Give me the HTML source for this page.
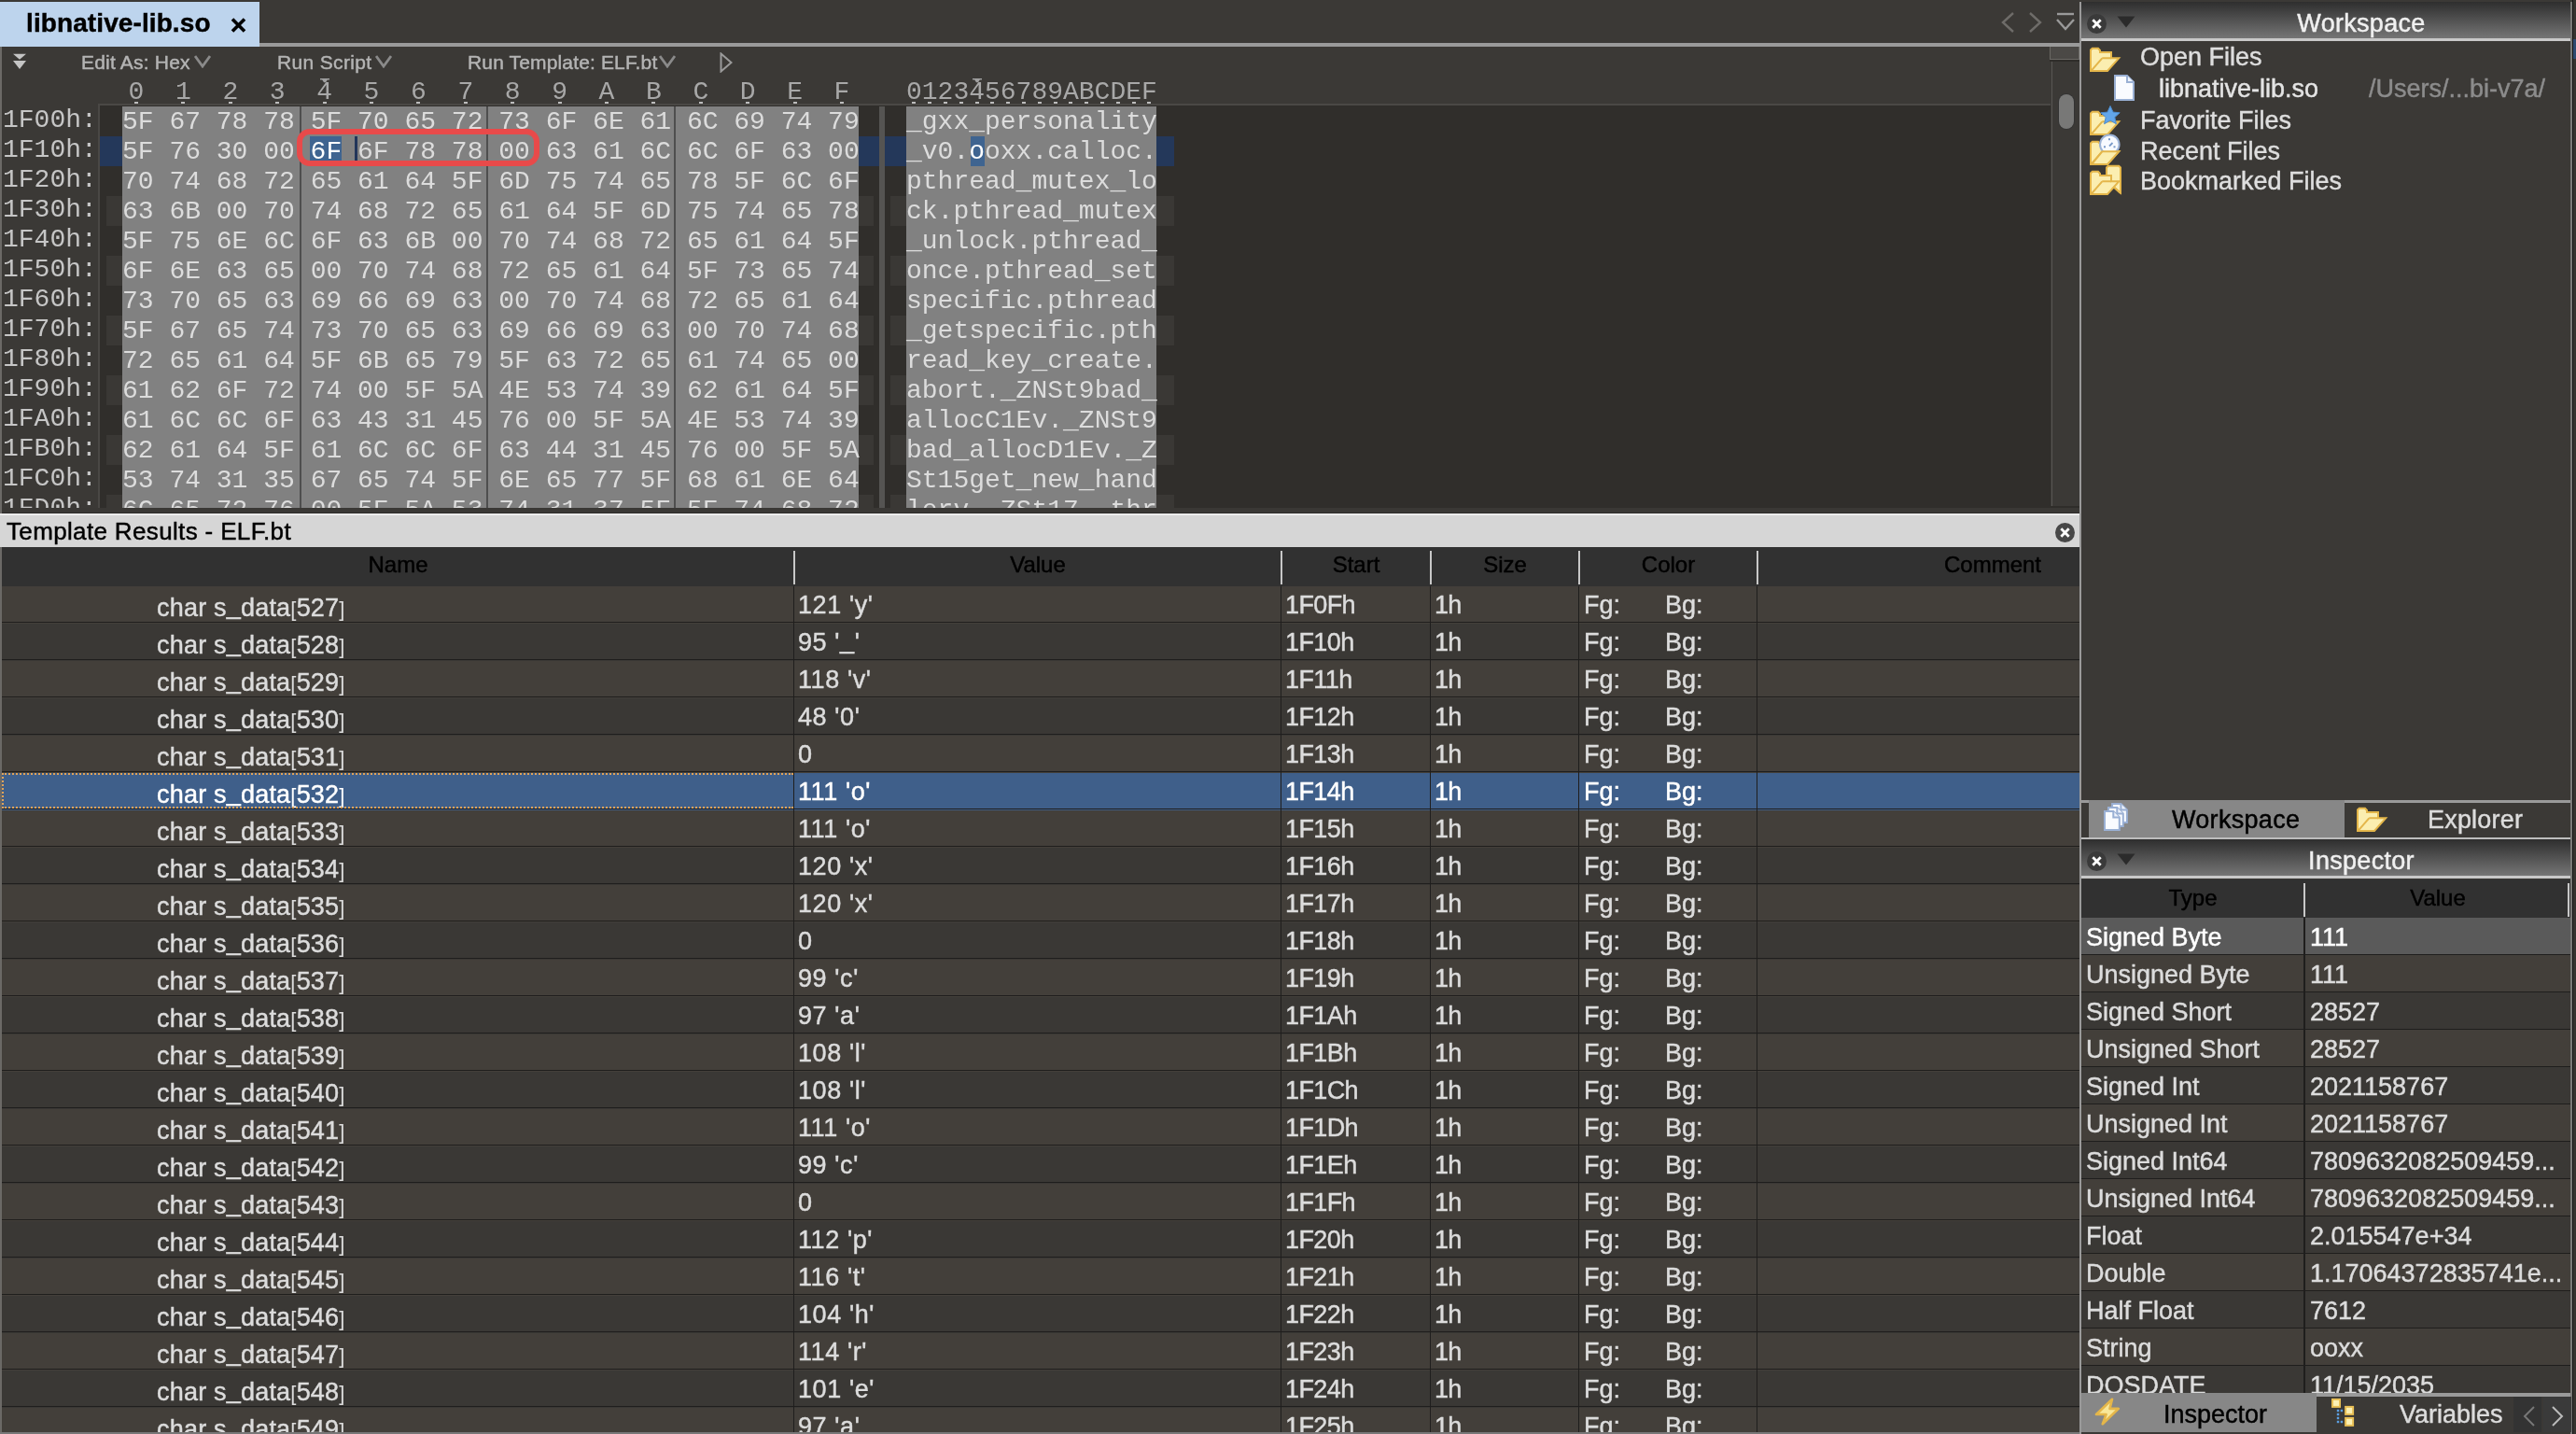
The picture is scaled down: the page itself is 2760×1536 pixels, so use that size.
<!DOCTYPE html><html><head><meta charset="utf-8"><style>
*{margin:0;padding:0;box-sizing:border-box}
html,body{width:2760px;height:1536px;overflow:hidden;background:#3b3936;font-family:"Liberation Sans",sans-serif}
.a{position:absolute}
.t{position:absolute;white-space:pre;line-height:1;-webkit-text-stroke-width:0.45px}
.m{font-family:"Liberation Mono",monospace;font-size:28px;-webkit-text-stroke-width:0}
#w{position:absolute;left:0;top:0;width:2760px;height:1536px;overflow:hidden;will-change:transform;background:#3b3936}
</style></head><body><div id="w">
<div class="a" style="left:0px;top:2px;width:278px;height:48px;background:#bdd4ed;"></div>
<div class="t" style="left:28px;top:11px;font-size:28px;color:#000;font-weight:bold;letter-spacing:0.1px">libnative-lib.so</div>
<svg class="a" style="left:245px;top:18px" width="21" height="18" viewBox="0 0 21 18"><path d="M4 2.5L17 15.5M17 2.5L4 15.5" stroke="#000" stroke-width="3.6"/></svg>
<div class="a" style="left:278px;top:46px;width:1950px;height:4px;background:#9a9a9a;"></div>
<div class="a" style="left:0px;top:50px;width:2px;height:1486px;background:#6b6966;"></div>
<svg class="a" style="left:2142px;top:12px" width="18" height="24" viewBox="0 0 18 24"><path d="M15 2L4 12l11 10" fill="none" stroke="#6e6c69" stroke-width="2.4"/></svg>
<svg class="a" style="left:2172px;top:12px" width="18" height="24" viewBox="0 0 18 24"><path d="M3 2l11 10L3 22" fill="none" stroke="#6e6c69" stroke-width="2.4"/></svg>
<svg class="a" style="left:2202px;top:12px" width="22" height="24" viewBox="0 0 22 24"><path d="M2 3h18" stroke="#9a9a9a" stroke-width="2.4"/><path d="M2 9l9 10 9-10" fill="none" stroke="#9a9a9a" stroke-width="2.4"/></svg>
<svg class="a" style="left:13px;top:57px" width="16" height="18" viewBox="0 0 16 18"><path d="M1 0.7h14l-7 6z M1 8h14l-7 9z" fill="#c4c4c4"/></svg>
<div class="t" style="left:87px;top:55.5px;font-size:21px;color:#b4b4b4;letter-spacing:0.2px">Edit As: Hex</div>
<svg class="a" style="left:208px;top:59px" width="18" height="14" viewBox="0 0 18 14"><path d="M1 1L9.0 12L17 1" fill="none" stroke="#8a8a8a" stroke-width="2.8"/></svg>
<div class="t" style="left:297px;top:55.5px;font-size:21px;color:#b4b4b4;letter-spacing:0.35px">Run Script</div>
<svg class="a" style="left:402px;top:59px" width="18" height="14" viewBox="0 0 18 14"><path d="M1 1L9.0 12L17 1" fill="none" stroke="#8a8a8a" stroke-width="2.8"/></svg>
<div class="t" style="left:501px;top:55.5px;font-size:21px;color:#b4b4b4;letter-spacing:0.15px">Run Template: ELF.bt</div>
<svg class="a" style="left:706px;top:59px" width="18" height="14" viewBox="0 0 18 14"><path d="M1 1L9.0 12L17 1" fill="none" stroke="#8a8a8a" stroke-width="2.8"/></svg>
<svg class="a" style="left:771px;top:56px" width="14" height="22" viewBox="0 0 14 22"><path d="M1.5 1.5L12.5 11L1.5 20.5z" fill="none" stroke="#9a9a9a" stroke-width="2"/></svg>
<div class="a" style="left:105px;top:111px;width:2092px;height:433px;background:#302e2b;border-top:2px solid #4a4845;border-left:2px solid #4a4845"></div>
<div class="a" style="left:2198px;top:64px;width:30px;height:478px;background:#3b3936;border-left:1.3px solid #585653"></div>
<div class="a" style="left:2196px;top:64px;width:32px;height:2px;background:#2f2d2a;"></div>
<div class="a" style="left:2197px;top:542px;width:31px;height:2px;background:#2f2d2a;"></div>
<div class="a" style="left:2196px;top:50px;width:32px;height:14px;background:#4b4946;border:1.5px solid #6a6864;border-top:none"></div>
<div class="a" style="left:2206px;top:101px;width:16px;height:37px;border-radius:8px;background:#787877;box-shadow:0 0 0 1px #333"></div>
<div class="t m" style="left:137.6px;top:84px;font-size:28px;color:#aaa;"></div>
<div class="t m" style="left:137.6px;top:85px;font-size:28px;color:#a8a8a8;">0</div>
<div class="a" style="left:144.0px;top:108.5px;width:4px;height:2px;background:#bdbdbd;"></div>
<div class="t m" style="left:188.0px;top:85px;font-size:28px;color:#a8a8a8;">1</div>
<div class="a" style="left:194.4px;top:108.5px;width:4px;height:2px;background:#bdbdbd;"></div>
<div class="t m" style="left:238.4px;top:85px;font-size:28px;color:#a8a8a8;">2</div>
<div class="a" style="left:244.8px;top:108.5px;width:4px;height:2px;background:#bdbdbd;"></div>
<div class="t m" style="left:288.8px;top:85px;font-size:28px;color:#a8a8a8;">3</div>
<div class="a" style="left:295.2px;top:108.5px;width:4px;height:2px;background:#bdbdbd;"></div>
<div class="t m" style="left:339.2px;top:85px;font-size:28px;color:#a8a8a8;">4</div>
<div class="a" style="left:345.6px;top:108.5px;width:4px;height:2px;background:#bdbdbd;"></div>
<div class="t m" style="left:389.6px;top:85px;font-size:28px;color:#a8a8a8;">5</div>
<div class="a" style="left:396.0px;top:108.5px;width:4px;height:2px;background:#bdbdbd;"></div>
<div class="t m" style="left:440.0px;top:85px;font-size:28px;color:#a8a8a8;">6</div>
<div class="a" style="left:446.4px;top:108.5px;width:4px;height:2px;background:#bdbdbd;"></div>
<div class="t m" style="left:490.4px;top:85px;font-size:28px;color:#a8a8a8;">7</div>
<div class="a" style="left:496.8px;top:108.5px;width:4px;height:2px;background:#bdbdbd;"></div>
<div class="t m" style="left:540.8px;top:85px;font-size:28px;color:#a8a8a8;">8</div>
<div class="a" style="left:547.2px;top:108.5px;width:4px;height:2px;background:#bdbdbd;"></div>
<div class="t m" style="left:591.2px;top:85px;font-size:28px;color:#a8a8a8;">9</div>
<div class="a" style="left:597.6px;top:108.5px;width:4px;height:2px;background:#bdbdbd;"></div>
<div class="t m" style="left:641.6px;top:85px;font-size:28px;color:#a8a8a8;">A</div>
<div class="a" style="left:648.0px;top:108.5px;width:4px;height:2px;background:#bdbdbd;"></div>
<div class="t m" style="left:692.0px;top:85px;font-size:28px;color:#a8a8a8;">B</div>
<div class="a" style="left:698.4px;top:108.5px;width:4px;height:2px;background:#bdbdbd;"></div>
<div class="t m" style="left:742.4px;top:85px;font-size:28px;color:#a8a8a8;">C</div>
<div class="a" style="left:748.8px;top:108.5px;width:4px;height:2px;background:#bdbdbd;"></div>
<div class="t m" style="left:792.8px;top:85px;font-size:28px;color:#a8a8a8;">D</div>
<div class="a" style="left:799.2px;top:108.5px;width:4px;height:2px;background:#bdbdbd;"></div>
<div class="t m" style="left:843.2px;top:85px;font-size:28px;color:#a8a8a8;">E</div>
<div class="a" style="left:849.6px;top:108.5px;width:4px;height:2px;background:#bdbdbd;"></div>
<div class="t m" style="left:893.6px;top:85px;font-size:28px;color:#a8a8a8;">F</div>
<div class="a" style="left:900.0px;top:108.5px;width:4px;height:2px;background:#bdbdbd;"></div>
<div class="t m" style="left:971.0px;top:85px;font-size:28px;color:#a8a8a8;">0</div>
<div class="a" style="left:977.4px;top:108.5px;width:4px;height:2px;background:#bdbdbd;"></div>
<div class="t m" style="left:987.8px;top:85px;font-size:28px;color:#a8a8a8;">1</div>
<div class="a" style="left:994.2px;top:108.5px;width:4px;height:2px;background:#bdbdbd;"></div>
<div class="t m" style="left:1004.6px;top:85px;font-size:28px;color:#a8a8a8;">2</div>
<div class="a" style="left:1011.0px;top:108.5px;width:4px;height:2px;background:#bdbdbd;"></div>
<div class="t m" style="left:1021.4px;top:85px;font-size:28px;color:#a8a8a8;">3</div>
<div class="a" style="left:1027.8px;top:108.5px;width:4px;height:2px;background:#bdbdbd;"></div>
<div class="t m" style="left:1038.2px;top:85px;font-size:28px;color:#a8a8a8;">4</div>
<div class="a" style="left:1044.6px;top:108.5px;width:4px;height:2px;background:#bdbdbd;"></div>
<div class="t m" style="left:1055.0px;top:85px;font-size:28px;color:#a8a8a8;">5</div>
<div class="a" style="left:1061.4px;top:108.5px;width:4px;height:2px;background:#bdbdbd;"></div>
<div class="t m" style="left:1071.8px;top:85px;font-size:28px;color:#a8a8a8;">6</div>
<div class="a" style="left:1078.2px;top:108.5px;width:4px;height:2px;background:#bdbdbd;"></div>
<div class="t m" style="left:1088.6px;top:85px;font-size:28px;color:#a8a8a8;">7</div>
<div class="a" style="left:1095.0px;top:108.5px;width:4px;height:2px;background:#bdbdbd;"></div>
<div class="t m" style="left:1105.4px;top:85px;font-size:28px;color:#a8a8a8;">8</div>
<div class="a" style="left:1111.8px;top:108.5px;width:4px;height:2px;background:#bdbdbd;"></div>
<div class="t m" style="left:1122.2px;top:85px;font-size:28px;color:#a8a8a8;">9</div>
<div class="a" style="left:1128.6px;top:108.5px;width:4px;height:2px;background:#bdbdbd;"></div>
<div class="t m" style="left:1139.0px;top:85px;font-size:28px;color:#a8a8a8;">A</div>
<div class="a" style="left:1145.4px;top:108.5px;width:4px;height:2px;background:#bdbdbd;"></div>
<div class="t m" style="left:1155.8px;top:85px;font-size:28px;color:#a8a8a8;">B</div>
<div class="a" style="left:1162.2px;top:108.5px;width:4px;height:2px;background:#bdbdbd;"></div>
<div class="t m" style="left:1172.6px;top:85px;font-size:28px;color:#a8a8a8;">C</div>
<div class="a" style="left:1179.0px;top:108.5px;width:4px;height:2px;background:#bdbdbd;"></div>
<div class="t m" style="left:1189.4px;top:85px;font-size:28px;color:#a8a8a8;">D</div>
<div class="a" style="left:1195.8px;top:108.5px;width:4px;height:2px;background:#bdbdbd;"></div>
<div class="t m" style="left:1206.2px;top:85px;font-size:28px;color:#a8a8a8;">E</div>
<div class="a" style="left:1212.6px;top:108.5px;width:4px;height:2px;background:#bdbdbd;"></div>
<div class="t m" style="left:1223.0px;top:85px;font-size:28px;color:#a8a8a8;">F</div>
<div class="a" style="left:1229.4px;top:108.5px;width:4px;height:2px;background:#bdbdbd;"></div>
<svg class="a" style="left:342px;top:83px" width="12" height="8" viewBox="0 0 12 8"><path d="M1 1h10v1.6h-2.2l-1.8 2.6h-2l-1.8-2.6H1z" fill="#a0a0a0"/></svg>
<svg class="a" style="left:1040.6px;top:83px" width="12" height="8" viewBox="0 0 12 8"><path d="M1 1h10v1.6h-2.2l-1.8 2.6h-2l-1.8-2.6H1z" fill="#a0a0a0"/></svg>
<div class="a" style="left:0;top:114px;width:2197px;height:430px;overflow:hidden">
<div class="a" style="left:131px;top:0px;width:789px;height:32px;background:#818181;"></div>
<div class="a" style="left:971px;top:0px;width:268px;height:32px;background:#818181;"></div>
<div class="t m" style="left:3px;top:1px;font-size:28px;color:#c6c6c6;">1F00h:</div>
<div class="t m" style="left:131px;top:3px;font-size:28px;color:#dcdcdc;">5F 67 78 78 5F 70 65 72 73 6F 6E 61 6C 69 74 79</div>
<div class="t m" style="left:971px;top:3px;font-size:28px;color:#dcdcdc;">_gxx_personality</div>
<div class="a" style="left:107px;top:32px;width:1151px;height:32px;background:#24385a;"></div>
<div class="a" style="left:131px;top:32px;width:789px;height:32px;background:#818181;"></div>
<div class="a" style="left:971px;top:32px;width:268px;height:32px;background:#818181;"></div>
<div class="t m" style="left:3px;top:33px;font-size:28px;color:#c6c6c6;">1F10h:</div>
<div class="t m" style="left:131px;top:35px;font-size:28px;color:#dcdcdc;">5F 76 30 00 6F 6F 78 78 00 63 61 6C 6C 6F 63 00</div>
<div class="t m" style="left:971px;top:35px;font-size:28px;color:#dcdcdc;">_v0.ooxx.calloc.</div>
<div class="a" style="left:131px;top:64px;width:789px;height:32px;background:#818181;"></div>
<div class="a" style="left:971px;top:64px;width:268px;height:32px;background:#818181;"></div>
<div class="t m" style="left:3px;top:65px;font-size:28px;color:#c6c6c6;">1F20h:</div>
<div class="t m" style="left:131px;top:67px;font-size:28px;color:#dcdcdc;">70 74 68 72 65 61 64 5F 6D 75 74 65 78 5F 6C 6F</div>
<div class="t m" style="left:971px;top:67px;font-size:28px;color:#dcdcdc;">pthread_mutex_lo</div>
<div class="a" style="left:114px;top:96px;width:17px;height:32px;background:#3a3835;"></div>
<div class="a" style="left:920px;top:96px;width:16px;height:32px;background:#3a3835;"></div>
<div class="a" style="left:954px;top:96px;width:17px;height:32px;background:#3a3835;"></div>
<div class="a" style="left:1239px;top:96px;width:19px;height:32px;background:#3a3835;"></div>
<div class="a" style="left:131px;top:96px;width:789px;height:32px;background:#818181;"></div>
<div class="a" style="left:971px;top:96px;width:268px;height:32px;background:#818181;"></div>
<div class="t m" style="left:3px;top:97px;font-size:28px;color:#c6c6c6;">1F30h:</div>
<div class="t m" style="left:131px;top:99px;font-size:28px;color:#dcdcdc;">63 6B 00 70 74 68 72 65 61 64 5F 6D 75 74 65 78</div>
<div class="t m" style="left:971px;top:99px;font-size:28px;color:#dcdcdc;">ck.pthread_mutex</div>
<div class="a" style="left:131px;top:128px;width:789px;height:32px;background:#818181;"></div>
<div class="a" style="left:971px;top:128px;width:268px;height:32px;background:#818181;"></div>
<div class="t m" style="left:3px;top:129px;font-size:28px;color:#c6c6c6;">1F40h:</div>
<div class="t m" style="left:131px;top:131px;font-size:28px;color:#dcdcdc;">5F 75 6E 6C 6F 63 6B 00 70 74 68 72 65 61 64 5F</div>
<div class="t m" style="left:971px;top:131px;font-size:28px;color:#dcdcdc;">_unlock.pthread_</div>
<div class="a" style="left:114px;top:160px;width:17px;height:32px;background:#3a3835;"></div>
<div class="a" style="left:920px;top:160px;width:16px;height:32px;background:#3a3835;"></div>
<div class="a" style="left:954px;top:160px;width:17px;height:32px;background:#3a3835;"></div>
<div class="a" style="left:1239px;top:160px;width:19px;height:32px;background:#3a3835;"></div>
<div class="a" style="left:131px;top:160px;width:789px;height:32px;background:#818181;"></div>
<div class="a" style="left:971px;top:160px;width:268px;height:32px;background:#818181;"></div>
<div class="t m" style="left:3px;top:161px;font-size:28px;color:#c6c6c6;">1F50h:</div>
<div class="t m" style="left:131px;top:163px;font-size:28px;color:#dcdcdc;">6F 6E 63 65 00 70 74 68 72 65 61 64 5F 73 65 74</div>
<div class="t m" style="left:971px;top:163px;font-size:28px;color:#dcdcdc;">once.pthread_set</div>
<div class="a" style="left:131px;top:192px;width:789px;height:32px;background:#818181;"></div>
<div class="a" style="left:971px;top:192px;width:268px;height:32px;background:#818181;"></div>
<div class="t m" style="left:3px;top:193px;font-size:28px;color:#c6c6c6;">1F60h:</div>
<div class="t m" style="left:131px;top:195px;font-size:28px;color:#dcdcdc;">73 70 65 63 69 66 69 63 00 70 74 68 72 65 61 64</div>
<div class="t m" style="left:971px;top:195px;font-size:28px;color:#dcdcdc;">specific.pthread</div>
<div class="a" style="left:114px;top:224px;width:17px;height:32px;background:#3a3835;"></div>
<div class="a" style="left:920px;top:224px;width:16px;height:32px;background:#3a3835;"></div>
<div class="a" style="left:954px;top:224px;width:17px;height:32px;background:#3a3835;"></div>
<div class="a" style="left:1239px;top:224px;width:19px;height:32px;background:#3a3835;"></div>
<div class="a" style="left:131px;top:224px;width:789px;height:32px;background:#818181;"></div>
<div class="a" style="left:971px;top:224px;width:268px;height:32px;background:#818181;"></div>
<div class="t m" style="left:3px;top:225px;font-size:28px;color:#c6c6c6;">1F70h:</div>
<div class="t m" style="left:131px;top:227px;font-size:28px;color:#dcdcdc;">5F 67 65 74 73 70 65 63 69 66 69 63 00 70 74 68</div>
<div class="t m" style="left:971px;top:227px;font-size:28px;color:#dcdcdc;">_getspecific.pth</div>
<div class="a" style="left:131px;top:256px;width:789px;height:32px;background:#818181;"></div>
<div class="a" style="left:971px;top:256px;width:268px;height:32px;background:#818181;"></div>
<div class="t m" style="left:3px;top:257px;font-size:28px;color:#c6c6c6;">1F80h:</div>
<div class="t m" style="left:131px;top:259px;font-size:28px;color:#dcdcdc;">72 65 61 64 5F 6B 65 79 5F 63 72 65 61 74 65 00</div>
<div class="t m" style="left:971px;top:259px;font-size:28px;color:#dcdcdc;">read_key_create.</div>
<div class="a" style="left:114px;top:288px;width:17px;height:32px;background:#3a3835;"></div>
<div class="a" style="left:920px;top:288px;width:16px;height:32px;background:#3a3835;"></div>
<div class="a" style="left:954px;top:288px;width:17px;height:32px;background:#3a3835;"></div>
<div class="a" style="left:1239px;top:288px;width:19px;height:32px;background:#3a3835;"></div>
<div class="a" style="left:131px;top:288px;width:789px;height:32px;background:#818181;"></div>
<div class="a" style="left:971px;top:288px;width:268px;height:32px;background:#818181;"></div>
<div class="t m" style="left:3px;top:289px;font-size:28px;color:#c6c6c6;">1F90h:</div>
<div class="t m" style="left:131px;top:291px;font-size:28px;color:#dcdcdc;">61 62 6F 72 74 00 5F 5A 4E 53 74 39 62 61 64 5F</div>
<div class="t m" style="left:971px;top:291px;font-size:28px;color:#dcdcdc;">abort._ZNSt9bad_</div>
<div class="a" style="left:131px;top:320px;width:789px;height:32px;background:#818181;"></div>
<div class="a" style="left:971px;top:320px;width:268px;height:32px;background:#818181;"></div>
<div class="t m" style="left:3px;top:321px;font-size:28px;color:#c6c6c6;">1FA0h:</div>
<div class="t m" style="left:131px;top:323px;font-size:28px;color:#dcdcdc;">61 6C 6C 6F 63 43 31 45 76 00 5F 5A 4E 53 74 39</div>
<div class="t m" style="left:971px;top:323px;font-size:28px;color:#dcdcdc;">allocC1Ev._ZNSt9</div>
<div class="a" style="left:114px;top:352px;width:17px;height:32px;background:#3a3835;"></div>
<div class="a" style="left:920px;top:352px;width:16px;height:32px;background:#3a3835;"></div>
<div class="a" style="left:954px;top:352px;width:17px;height:32px;background:#3a3835;"></div>
<div class="a" style="left:1239px;top:352px;width:19px;height:32px;background:#3a3835;"></div>
<div class="a" style="left:131px;top:352px;width:789px;height:32px;background:#818181;"></div>
<div class="a" style="left:971px;top:352px;width:268px;height:32px;background:#818181;"></div>
<div class="t m" style="left:3px;top:353px;font-size:28px;color:#c6c6c6;">1FB0h:</div>
<div class="t m" style="left:131px;top:355px;font-size:28px;color:#dcdcdc;">62 61 64 5F 61 6C 6C 6F 63 44 31 45 76 00 5F 5A</div>
<div class="t m" style="left:971px;top:355px;font-size:28px;color:#dcdcdc;">bad_allocD1Ev._Z</div>
<div class="a" style="left:131px;top:384px;width:789px;height:32px;background:#818181;"></div>
<div class="a" style="left:971px;top:384px;width:268px;height:32px;background:#818181;"></div>
<div class="t m" style="left:3px;top:385px;font-size:28px;color:#c6c6c6;">1FC0h:</div>
<div class="t m" style="left:131px;top:387px;font-size:28px;color:#dcdcdc;">53 74 31 35 67 65 74 5F 6E 65 77 5F 68 61 6E 64</div>
<div class="t m" style="left:971px;top:387px;font-size:28px;color:#dcdcdc;">St15get_new_hand</div>
<div class="a" style="left:114px;top:416px;width:17px;height:32px;background:#3a3835;"></div>
<div class="a" style="left:920px;top:416px;width:16px;height:32px;background:#3a3835;"></div>
<div class="a" style="left:954px;top:416px;width:17px;height:32px;background:#3a3835;"></div>
<div class="a" style="left:1239px;top:416px;width:19px;height:32px;background:#3a3835;"></div>
<div class="a" style="left:131px;top:416px;width:789px;height:32px;background:#818181;"></div>
<div class="a" style="left:971px;top:416px;width:268px;height:32px;background:#818181;"></div>
<div class="t m" style="left:3px;top:417px;font-size:28px;color:#c6c6c6;">1FD0h:</div>
<div class="t m" style="left:131px;top:419px;font-size:28px;color:#dcdcdc;">6C 65 72 76 00 5F 5A 53 74 31 37 5F 5F 74 68 72</div>
<div class="t m" style="left:971px;top:419px;font-size:28px;color:#dcdcdc;">lerv._ZSt17__thr</div>
</div>
<div class="a" style="left:321px;top:114px;width:2px;height:430px;background:#4e4e4e;"></div>
<div class="a" style="left:521px;top:114px;width:2px;height:430px;background:#4e4e4e;"></div>
<div class="a" style="left:722px;top:114px;width:2px;height:430px;background:#4e4e4e;"></div>
<div class="a" style="left:942px;top:114px;width:6px;height:430px;background:#555452;"></div>
<div class="a" style="left:332px;top:146px;width:34px;height:26px;background:#3f6490;"></div>
<div class="t m" style="left:332.6px;top:149px;font-size:28px;color:#ffffff;">6F</div>
<div class="a" style="left:380px;top:146px;width:3px;height:26px;background:#22355a;"></div>
<div class="a" style="left:1040px;top:146px;width:15px;height:32px;background:#3f6490;"></div>
<div class="t m" style="left:1038.2px;top:149px;font-size:28px;color:#ffffff;">o</div>
<div class="a" style="left:318px;top:138px;width:260px;height:40px;border:6px solid #e84a4a;border-radius:14px"></div>
<div class="a" style="left:2px;top:544px;width:2226px;height:5px;background:#3a3835;"></div>
<div class="a" style="left:2px;top:549px;width:2226px;height:1px;background:#2e2c2a;"></div>
<div class="a" style="left:0px;top:550px;width:2228px;height:36px;background:#d6d6d6;"></div>
<div class="a" style="left:0px;top:550px;width:2228px;height:1.5px;background:#ececec;"></div>
<div class="t" style="left:7px;top:556px;font-size:26px;color:#000;letter-spacing:0.35px">Template Results - ELF.bt</div>
<svg class="a" style="left:2201px;top:559px" width="23" height="23" viewBox="0 0 23 23"><circle cx="11.5" cy="11.5" r="10.5" fill="#484848"/><path d="M8.3 8.3L14.7 14.7M14.7 8.3L8.3 14.7" stroke="#fff" stroke-width="2.8" stroke-linecap="square"/></svg>
<div class="a" style="left:2px;top:586px;width:2226px;height:42px;background:#313131;"></div>
<div class="t" style="left:2px;top:593px;width:849px;text-align:center;font-size:24px;color:#000">Name</div>
<div class="t" style="left:851px;top:593px;width:522px;text-align:center;font-size:24px;color:#000">Value</div>
<div class="t" style="left:1373px;top:593px;width:160px;text-align:center;font-size:24px;color:#000">Start</div>
<div class="t" style="left:1533px;top:593px;width:159px;text-align:center;font-size:24px;color:#000">Size</div>
<div class="t" style="left:1692px;top:593px;width:191px;text-align:center;font-size:24px;color:#000">Color</div>
<div class="t" style="left:1883px;top:593px;width:504px;text-align:center;font-size:24px;color:#000">Comment</div>
<div class="a" style="left:850px;top:590px;width:2px;height:36px;background:#c8c8c8;"></div>
<div class="a" style="left:1372px;top:590px;width:2px;height:36px;background:#c8c8c8;"></div>
<div class="a" style="left:1532px;top:590px;width:2px;height:36px;background:#c8c8c8;"></div>
<div class="a" style="left:1691px;top:590px;width:2px;height:36px;background:#c8c8c8;"></div>
<div class="a" style="left:1882px;top:590px;width:2px;height:36px;background:#c8c8c8;"></div>
<div class="a" style="left:2px;top:628px;width:2226px;height:908px;overflow:hidden">
<div class="a" style="left:0px;top:0px;width:2226px;height:40px;background:#433f3a;"></div>
<div class="a" style="left:0px;top:38px;width:2226px;height:1px;background:#1f1e1d;"></div>
<div class="t" style="left:166px;top:10px;font-size:27px;color:#dcdcdc;letter-spacing:0.2px">char s<span style="position:relative;top:-3px">_</span>data<span style="font-size:22px;-webkit-text-stroke-width:0">[</span>527<span style="font-size:22px;-webkit-text-stroke-width:0">]</span></div>
<div class="t" style="left:853px;top:7px;font-size:27px;color:#dcdcdc;letter-spacing:0.6px">121 'y'</div>
<div class="t" style="left:1375px;top:7px;font-size:27px;color:#dcdcdc;letter-spacing:-0.6px">1F0Fh</div>
<div class="t" style="left:1535px;top:7px;font-size:27px;color:#dcdcdc;letter-spacing:-0.8px">1h</div>
<div class="t" style="left:1695px;top:7px;font-size:27px;color:#dcdcdc;">Fg:</div>
<div class="t" style="left:1782px;top:7px;font-size:27px;color:#dcdcdc;">Bg:</div>
<div class="a" style="left:848px;top:0px;width:1px;height:40px;background:#1f1e1d;"></div>
<div class="a" style="left:1370px;top:0px;width:1px;height:40px;background:#1f1e1d;"></div>
<div class="a" style="left:1530px;top:0px;width:1px;height:40px;background:#1f1e1d;"></div>
<div class="a" style="left:1689px;top:0px;width:1px;height:40px;background:#1f1e1d;"></div>
<div class="a" style="left:1880px;top:0px;width:1px;height:40px;background:#1f1e1d;"></div>
<div class="a" style="left:0px;top:40px;width:2226px;height:40px;background:#3a3835;"></div>
<div class="a" style="left:0px;top:78px;width:2226px;height:1px;background:#1f1e1d;"></div>
<div class="t" style="left:166px;top:50px;font-size:27px;color:#dcdcdc;letter-spacing:0.2px">char s<span style="position:relative;top:-3px">_</span>data<span style="font-size:22px;-webkit-text-stroke-width:0">[</span>528<span style="font-size:22px;-webkit-text-stroke-width:0">]</span></div>
<div class="t" style="left:853px;top:47px;font-size:27px;color:#dcdcdc;letter-spacing:0.6px">95 '<span style="position:relative;top:-3px">_</span>'</div>
<div class="t" style="left:1375px;top:47px;font-size:27px;color:#dcdcdc;letter-spacing:-0.6px">1F10h</div>
<div class="t" style="left:1535px;top:47px;font-size:27px;color:#dcdcdc;letter-spacing:-0.8px">1h</div>
<div class="t" style="left:1695px;top:47px;font-size:27px;color:#dcdcdc;">Fg:</div>
<div class="t" style="left:1782px;top:47px;font-size:27px;color:#dcdcdc;">Bg:</div>
<div class="a" style="left:848px;top:40px;width:1px;height:40px;background:#1f1e1d;"></div>
<div class="a" style="left:1370px;top:40px;width:1px;height:40px;background:#1f1e1d;"></div>
<div class="a" style="left:1530px;top:40px;width:1px;height:40px;background:#1f1e1d;"></div>
<div class="a" style="left:1689px;top:40px;width:1px;height:40px;background:#1f1e1d;"></div>
<div class="a" style="left:1880px;top:40px;width:1px;height:40px;background:#1f1e1d;"></div>
<div class="a" style="left:0px;top:80px;width:2226px;height:40px;background:#433f3a;"></div>
<div class="a" style="left:0px;top:118px;width:2226px;height:1px;background:#1f1e1d;"></div>
<div class="t" style="left:166px;top:90px;font-size:27px;color:#dcdcdc;letter-spacing:0.2px">char s<span style="position:relative;top:-3px">_</span>data<span style="font-size:22px;-webkit-text-stroke-width:0">[</span>529<span style="font-size:22px;-webkit-text-stroke-width:0">]</span></div>
<div class="t" style="left:853px;top:87px;font-size:27px;color:#dcdcdc;letter-spacing:0.6px">118 'v'</div>
<div class="t" style="left:1375px;top:87px;font-size:27px;color:#dcdcdc;letter-spacing:-0.6px">1F11h</div>
<div class="t" style="left:1535px;top:87px;font-size:27px;color:#dcdcdc;letter-spacing:-0.8px">1h</div>
<div class="t" style="left:1695px;top:87px;font-size:27px;color:#dcdcdc;">Fg:</div>
<div class="t" style="left:1782px;top:87px;font-size:27px;color:#dcdcdc;">Bg:</div>
<div class="a" style="left:848px;top:80px;width:1px;height:40px;background:#1f1e1d;"></div>
<div class="a" style="left:1370px;top:80px;width:1px;height:40px;background:#1f1e1d;"></div>
<div class="a" style="left:1530px;top:80px;width:1px;height:40px;background:#1f1e1d;"></div>
<div class="a" style="left:1689px;top:80px;width:1px;height:40px;background:#1f1e1d;"></div>
<div class="a" style="left:1880px;top:80px;width:1px;height:40px;background:#1f1e1d;"></div>
<div class="a" style="left:0px;top:120px;width:2226px;height:40px;background:#3a3835;"></div>
<div class="a" style="left:0px;top:158px;width:2226px;height:1px;background:#1f1e1d;"></div>
<div class="t" style="left:166px;top:130px;font-size:27px;color:#dcdcdc;letter-spacing:0.2px">char s<span style="position:relative;top:-3px">_</span>data<span style="font-size:22px;-webkit-text-stroke-width:0">[</span>530<span style="font-size:22px;-webkit-text-stroke-width:0">]</span></div>
<div class="t" style="left:853px;top:127px;font-size:27px;color:#dcdcdc;letter-spacing:0.6px">48 '0'</div>
<div class="t" style="left:1375px;top:127px;font-size:27px;color:#dcdcdc;letter-spacing:-0.6px">1F12h</div>
<div class="t" style="left:1535px;top:127px;font-size:27px;color:#dcdcdc;letter-spacing:-0.8px">1h</div>
<div class="t" style="left:1695px;top:127px;font-size:27px;color:#dcdcdc;">Fg:</div>
<div class="t" style="left:1782px;top:127px;font-size:27px;color:#dcdcdc;">Bg:</div>
<div class="a" style="left:848px;top:120px;width:1px;height:40px;background:#1f1e1d;"></div>
<div class="a" style="left:1370px;top:120px;width:1px;height:40px;background:#1f1e1d;"></div>
<div class="a" style="left:1530px;top:120px;width:1px;height:40px;background:#1f1e1d;"></div>
<div class="a" style="left:1689px;top:120px;width:1px;height:40px;background:#1f1e1d;"></div>
<div class="a" style="left:1880px;top:120px;width:1px;height:40px;background:#1f1e1d;"></div>
<div class="a" style="left:0px;top:160px;width:2226px;height:40px;background:#433f3a;"></div>
<div class="a" style="left:0px;top:198px;width:2226px;height:1px;background:#1f1e1d;"></div>
<div class="t" style="left:166px;top:170px;font-size:27px;color:#dcdcdc;letter-spacing:0.2px">char s<span style="position:relative;top:-3px">_</span>data<span style="font-size:22px;-webkit-text-stroke-width:0">[</span>531<span style="font-size:22px;-webkit-text-stroke-width:0">]</span></div>
<div class="t" style="left:853px;top:167px;font-size:27px;color:#dcdcdc;letter-spacing:0.6px">0</div>
<div class="t" style="left:1375px;top:167px;font-size:27px;color:#dcdcdc;letter-spacing:-0.6px">1F13h</div>
<div class="t" style="left:1535px;top:167px;font-size:27px;color:#dcdcdc;letter-spacing:-0.8px">1h</div>
<div class="t" style="left:1695px;top:167px;font-size:27px;color:#dcdcdc;">Fg:</div>
<div class="t" style="left:1782px;top:167px;font-size:27px;color:#dcdcdc;">Bg:</div>
<div class="a" style="left:848px;top:160px;width:1px;height:40px;background:#1f1e1d;"></div>
<div class="a" style="left:1370px;top:160px;width:1px;height:40px;background:#1f1e1d;"></div>
<div class="a" style="left:1530px;top:160px;width:1px;height:40px;background:#1f1e1d;"></div>
<div class="a" style="left:1689px;top:160px;width:1px;height:40px;background:#1f1e1d;"></div>
<div class="a" style="left:1880px;top:160px;width:1px;height:40px;background:#1f1e1d;"></div>
<div class="a" style="left:0px;top:200px;width:2226px;height:40px;background:#3f5f8a;"></div>
<div class="a" style="left:0px;top:238px;width:2226px;height:1px;background:#1f1e1d;"></div>
<div class="t" style="left:166px;top:210px;font-size:27px;color:#ffffff;letter-spacing:0.2px">char s<span style="position:relative;top:-3px">_</span>data<span style="font-size:22px;-webkit-text-stroke-width:0">[</span>532<span style="font-size:22px;-webkit-text-stroke-width:0">]</span></div>
<div class="t" style="left:853px;top:207px;font-size:27px;color:#ffffff;letter-spacing:0.6px">111 'o'</div>
<div class="t" style="left:1375px;top:207px;font-size:27px;color:#ffffff;letter-spacing:-0.6px">1F14h</div>
<div class="t" style="left:1535px;top:207px;font-size:27px;color:#ffffff;letter-spacing:-0.8px">1h</div>
<div class="t" style="left:1695px;top:207px;font-size:27px;color:#ffffff;">Fg:</div>
<div class="t" style="left:1782px;top:207px;font-size:27px;color:#ffffff;">Bg:</div>
<div class="a" style="left:848px;top:200px;width:1px;height:40px;background:#1f1e1d;"></div>
<div class="a" style="left:1370px;top:200px;width:1px;height:40px;background:#1f1e1d;"></div>
<div class="a" style="left:1530px;top:200px;width:1px;height:40px;background:#1f1e1d;"></div>
<div class="a" style="left:1689px;top:200px;width:1px;height:40px;background:#1f1e1d;"></div>
<div class="a" style="left:1880px;top:200px;width:1px;height:40px;background:#1f1e1d;"></div>
<div class="a" style="left:0px;top:200px;width:848px;height:38px;border:2px dotted #e0a35a;border-right:none"></div>
<div class="a" style="left:0px;top:240px;width:2226px;height:40px;background:#433f3a;"></div>
<div class="a" style="left:0px;top:278px;width:2226px;height:1px;background:#1f1e1d;"></div>
<div class="t" style="left:166px;top:250px;font-size:27px;color:#dcdcdc;letter-spacing:0.2px">char s<span style="position:relative;top:-3px">_</span>data<span style="font-size:22px;-webkit-text-stroke-width:0">[</span>533<span style="font-size:22px;-webkit-text-stroke-width:0">]</span></div>
<div class="t" style="left:853px;top:247px;font-size:27px;color:#dcdcdc;letter-spacing:0.6px">111 'o'</div>
<div class="t" style="left:1375px;top:247px;font-size:27px;color:#dcdcdc;letter-spacing:-0.6px">1F15h</div>
<div class="t" style="left:1535px;top:247px;font-size:27px;color:#dcdcdc;letter-spacing:-0.8px">1h</div>
<div class="t" style="left:1695px;top:247px;font-size:27px;color:#dcdcdc;">Fg:</div>
<div class="t" style="left:1782px;top:247px;font-size:27px;color:#dcdcdc;">Bg:</div>
<div class="a" style="left:848px;top:240px;width:1px;height:40px;background:#1f1e1d;"></div>
<div class="a" style="left:1370px;top:240px;width:1px;height:40px;background:#1f1e1d;"></div>
<div class="a" style="left:1530px;top:240px;width:1px;height:40px;background:#1f1e1d;"></div>
<div class="a" style="left:1689px;top:240px;width:1px;height:40px;background:#1f1e1d;"></div>
<div class="a" style="left:1880px;top:240px;width:1px;height:40px;background:#1f1e1d;"></div>
<div class="a" style="left:0px;top:280px;width:2226px;height:40px;background:#3a3835;"></div>
<div class="a" style="left:0px;top:318px;width:2226px;height:1px;background:#1f1e1d;"></div>
<div class="t" style="left:166px;top:290px;font-size:27px;color:#dcdcdc;letter-spacing:0.2px">char s<span style="position:relative;top:-3px">_</span>data<span style="font-size:22px;-webkit-text-stroke-width:0">[</span>534<span style="font-size:22px;-webkit-text-stroke-width:0">]</span></div>
<div class="t" style="left:853px;top:287px;font-size:27px;color:#dcdcdc;letter-spacing:0.6px">120 'x'</div>
<div class="t" style="left:1375px;top:287px;font-size:27px;color:#dcdcdc;letter-spacing:-0.6px">1F16h</div>
<div class="t" style="left:1535px;top:287px;font-size:27px;color:#dcdcdc;letter-spacing:-0.8px">1h</div>
<div class="t" style="left:1695px;top:287px;font-size:27px;color:#dcdcdc;">Fg:</div>
<div class="t" style="left:1782px;top:287px;font-size:27px;color:#dcdcdc;">Bg:</div>
<div class="a" style="left:848px;top:280px;width:1px;height:40px;background:#1f1e1d;"></div>
<div class="a" style="left:1370px;top:280px;width:1px;height:40px;background:#1f1e1d;"></div>
<div class="a" style="left:1530px;top:280px;width:1px;height:40px;background:#1f1e1d;"></div>
<div class="a" style="left:1689px;top:280px;width:1px;height:40px;background:#1f1e1d;"></div>
<div class="a" style="left:1880px;top:280px;width:1px;height:40px;background:#1f1e1d;"></div>
<div class="a" style="left:0px;top:320px;width:2226px;height:40px;background:#433f3a;"></div>
<div class="a" style="left:0px;top:358px;width:2226px;height:1px;background:#1f1e1d;"></div>
<div class="t" style="left:166px;top:330px;font-size:27px;color:#dcdcdc;letter-spacing:0.2px">char s<span style="position:relative;top:-3px">_</span>data<span style="font-size:22px;-webkit-text-stroke-width:0">[</span>535<span style="font-size:22px;-webkit-text-stroke-width:0">]</span></div>
<div class="t" style="left:853px;top:327px;font-size:27px;color:#dcdcdc;letter-spacing:0.6px">120 'x'</div>
<div class="t" style="left:1375px;top:327px;font-size:27px;color:#dcdcdc;letter-spacing:-0.6px">1F17h</div>
<div class="t" style="left:1535px;top:327px;font-size:27px;color:#dcdcdc;letter-spacing:-0.8px">1h</div>
<div class="t" style="left:1695px;top:327px;font-size:27px;color:#dcdcdc;">Fg:</div>
<div class="t" style="left:1782px;top:327px;font-size:27px;color:#dcdcdc;">Bg:</div>
<div class="a" style="left:848px;top:320px;width:1px;height:40px;background:#1f1e1d;"></div>
<div class="a" style="left:1370px;top:320px;width:1px;height:40px;background:#1f1e1d;"></div>
<div class="a" style="left:1530px;top:320px;width:1px;height:40px;background:#1f1e1d;"></div>
<div class="a" style="left:1689px;top:320px;width:1px;height:40px;background:#1f1e1d;"></div>
<div class="a" style="left:1880px;top:320px;width:1px;height:40px;background:#1f1e1d;"></div>
<div class="a" style="left:0px;top:360px;width:2226px;height:40px;background:#3a3835;"></div>
<div class="a" style="left:0px;top:398px;width:2226px;height:1px;background:#1f1e1d;"></div>
<div class="t" style="left:166px;top:370px;font-size:27px;color:#dcdcdc;letter-spacing:0.2px">char s<span style="position:relative;top:-3px">_</span>data<span style="font-size:22px;-webkit-text-stroke-width:0">[</span>536<span style="font-size:22px;-webkit-text-stroke-width:0">]</span></div>
<div class="t" style="left:853px;top:367px;font-size:27px;color:#dcdcdc;letter-spacing:0.6px">0</div>
<div class="t" style="left:1375px;top:367px;font-size:27px;color:#dcdcdc;letter-spacing:-0.6px">1F18h</div>
<div class="t" style="left:1535px;top:367px;font-size:27px;color:#dcdcdc;letter-spacing:-0.8px">1h</div>
<div class="t" style="left:1695px;top:367px;font-size:27px;color:#dcdcdc;">Fg:</div>
<div class="t" style="left:1782px;top:367px;font-size:27px;color:#dcdcdc;">Bg:</div>
<div class="a" style="left:848px;top:360px;width:1px;height:40px;background:#1f1e1d;"></div>
<div class="a" style="left:1370px;top:360px;width:1px;height:40px;background:#1f1e1d;"></div>
<div class="a" style="left:1530px;top:360px;width:1px;height:40px;background:#1f1e1d;"></div>
<div class="a" style="left:1689px;top:360px;width:1px;height:40px;background:#1f1e1d;"></div>
<div class="a" style="left:1880px;top:360px;width:1px;height:40px;background:#1f1e1d;"></div>
<div class="a" style="left:0px;top:400px;width:2226px;height:40px;background:#433f3a;"></div>
<div class="a" style="left:0px;top:438px;width:2226px;height:1px;background:#1f1e1d;"></div>
<div class="t" style="left:166px;top:410px;font-size:27px;color:#dcdcdc;letter-spacing:0.2px">char s<span style="position:relative;top:-3px">_</span>data<span style="font-size:22px;-webkit-text-stroke-width:0">[</span>537<span style="font-size:22px;-webkit-text-stroke-width:0">]</span></div>
<div class="t" style="left:853px;top:407px;font-size:27px;color:#dcdcdc;letter-spacing:0.6px">99 'c'</div>
<div class="t" style="left:1375px;top:407px;font-size:27px;color:#dcdcdc;letter-spacing:-0.6px">1F19h</div>
<div class="t" style="left:1535px;top:407px;font-size:27px;color:#dcdcdc;letter-spacing:-0.8px">1h</div>
<div class="t" style="left:1695px;top:407px;font-size:27px;color:#dcdcdc;">Fg:</div>
<div class="t" style="left:1782px;top:407px;font-size:27px;color:#dcdcdc;">Bg:</div>
<div class="a" style="left:848px;top:400px;width:1px;height:40px;background:#1f1e1d;"></div>
<div class="a" style="left:1370px;top:400px;width:1px;height:40px;background:#1f1e1d;"></div>
<div class="a" style="left:1530px;top:400px;width:1px;height:40px;background:#1f1e1d;"></div>
<div class="a" style="left:1689px;top:400px;width:1px;height:40px;background:#1f1e1d;"></div>
<div class="a" style="left:1880px;top:400px;width:1px;height:40px;background:#1f1e1d;"></div>
<div class="a" style="left:0px;top:440px;width:2226px;height:40px;background:#3a3835;"></div>
<div class="a" style="left:0px;top:478px;width:2226px;height:1px;background:#1f1e1d;"></div>
<div class="t" style="left:166px;top:450px;font-size:27px;color:#dcdcdc;letter-spacing:0.2px">char s<span style="position:relative;top:-3px">_</span>data<span style="font-size:22px;-webkit-text-stroke-width:0">[</span>538<span style="font-size:22px;-webkit-text-stroke-width:0">]</span></div>
<div class="t" style="left:853px;top:447px;font-size:27px;color:#dcdcdc;letter-spacing:0.6px">97 'a'</div>
<div class="t" style="left:1375px;top:447px;font-size:27px;color:#dcdcdc;letter-spacing:-0.6px">1F1Ah</div>
<div class="t" style="left:1535px;top:447px;font-size:27px;color:#dcdcdc;letter-spacing:-0.8px">1h</div>
<div class="t" style="left:1695px;top:447px;font-size:27px;color:#dcdcdc;">Fg:</div>
<div class="t" style="left:1782px;top:447px;font-size:27px;color:#dcdcdc;">Bg:</div>
<div class="a" style="left:848px;top:440px;width:1px;height:40px;background:#1f1e1d;"></div>
<div class="a" style="left:1370px;top:440px;width:1px;height:40px;background:#1f1e1d;"></div>
<div class="a" style="left:1530px;top:440px;width:1px;height:40px;background:#1f1e1d;"></div>
<div class="a" style="left:1689px;top:440px;width:1px;height:40px;background:#1f1e1d;"></div>
<div class="a" style="left:1880px;top:440px;width:1px;height:40px;background:#1f1e1d;"></div>
<div class="a" style="left:0px;top:480px;width:2226px;height:40px;background:#433f3a;"></div>
<div class="a" style="left:0px;top:518px;width:2226px;height:1px;background:#1f1e1d;"></div>
<div class="t" style="left:166px;top:490px;font-size:27px;color:#dcdcdc;letter-spacing:0.2px">char s<span style="position:relative;top:-3px">_</span>data<span style="font-size:22px;-webkit-text-stroke-width:0">[</span>539<span style="font-size:22px;-webkit-text-stroke-width:0">]</span></div>
<div class="t" style="left:853px;top:487px;font-size:27px;color:#dcdcdc;letter-spacing:0.6px">108 'l'</div>
<div class="t" style="left:1375px;top:487px;font-size:27px;color:#dcdcdc;letter-spacing:-0.6px">1F1Bh</div>
<div class="t" style="left:1535px;top:487px;font-size:27px;color:#dcdcdc;letter-spacing:-0.8px">1h</div>
<div class="t" style="left:1695px;top:487px;font-size:27px;color:#dcdcdc;">Fg:</div>
<div class="t" style="left:1782px;top:487px;font-size:27px;color:#dcdcdc;">Bg:</div>
<div class="a" style="left:848px;top:480px;width:1px;height:40px;background:#1f1e1d;"></div>
<div class="a" style="left:1370px;top:480px;width:1px;height:40px;background:#1f1e1d;"></div>
<div class="a" style="left:1530px;top:480px;width:1px;height:40px;background:#1f1e1d;"></div>
<div class="a" style="left:1689px;top:480px;width:1px;height:40px;background:#1f1e1d;"></div>
<div class="a" style="left:1880px;top:480px;width:1px;height:40px;background:#1f1e1d;"></div>
<div class="a" style="left:0px;top:520px;width:2226px;height:40px;background:#3a3835;"></div>
<div class="a" style="left:0px;top:558px;width:2226px;height:1px;background:#1f1e1d;"></div>
<div class="t" style="left:166px;top:530px;font-size:27px;color:#dcdcdc;letter-spacing:0.2px">char s<span style="position:relative;top:-3px">_</span>data<span style="font-size:22px;-webkit-text-stroke-width:0">[</span>540<span style="font-size:22px;-webkit-text-stroke-width:0">]</span></div>
<div class="t" style="left:853px;top:527px;font-size:27px;color:#dcdcdc;letter-spacing:0.6px">108 'l'</div>
<div class="t" style="left:1375px;top:527px;font-size:27px;color:#dcdcdc;letter-spacing:-0.6px">1F1Ch</div>
<div class="t" style="left:1535px;top:527px;font-size:27px;color:#dcdcdc;letter-spacing:-0.8px">1h</div>
<div class="t" style="left:1695px;top:527px;font-size:27px;color:#dcdcdc;">Fg:</div>
<div class="t" style="left:1782px;top:527px;font-size:27px;color:#dcdcdc;">Bg:</div>
<div class="a" style="left:848px;top:520px;width:1px;height:40px;background:#1f1e1d;"></div>
<div class="a" style="left:1370px;top:520px;width:1px;height:40px;background:#1f1e1d;"></div>
<div class="a" style="left:1530px;top:520px;width:1px;height:40px;background:#1f1e1d;"></div>
<div class="a" style="left:1689px;top:520px;width:1px;height:40px;background:#1f1e1d;"></div>
<div class="a" style="left:1880px;top:520px;width:1px;height:40px;background:#1f1e1d;"></div>
<div class="a" style="left:0px;top:560px;width:2226px;height:40px;background:#433f3a;"></div>
<div class="a" style="left:0px;top:598px;width:2226px;height:1px;background:#1f1e1d;"></div>
<div class="t" style="left:166px;top:570px;font-size:27px;color:#dcdcdc;letter-spacing:0.2px">char s<span style="position:relative;top:-3px">_</span>data<span style="font-size:22px;-webkit-text-stroke-width:0">[</span>541<span style="font-size:22px;-webkit-text-stroke-width:0">]</span></div>
<div class="t" style="left:853px;top:567px;font-size:27px;color:#dcdcdc;letter-spacing:0.6px">111 'o'</div>
<div class="t" style="left:1375px;top:567px;font-size:27px;color:#dcdcdc;letter-spacing:-0.6px">1F1Dh</div>
<div class="t" style="left:1535px;top:567px;font-size:27px;color:#dcdcdc;letter-spacing:-0.8px">1h</div>
<div class="t" style="left:1695px;top:567px;font-size:27px;color:#dcdcdc;">Fg:</div>
<div class="t" style="left:1782px;top:567px;font-size:27px;color:#dcdcdc;">Bg:</div>
<div class="a" style="left:848px;top:560px;width:1px;height:40px;background:#1f1e1d;"></div>
<div class="a" style="left:1370px;top:560px;width:1px;height:40px;background:#1f1e1d;"></div>
<div class="a" style="left:1530px;top:560px;width:1px;height:40px;background:#1f1e1d;"></div>
<div class="a" style="left:1689px;top:560px;width:1px;height:40px;background:#1f1e1d;"></div>
<div class="a" style="left:1880px;top:560px;width:1px;height:40px;background:#1f1e1d;"></div>
<div class="a" style="left:0px;top:600px;width:2226px;height:40px;background:#3a3835;"></div>
<div class="a" style="left:0px;top:638px;width:2226px;height:1px;background:#1f1e1d;"></div>
<div class="t" style="left:166px;top:610px;font-size:27px;color:#dcdcdc;letter-spacing:0.2px">char s<span style="position:relative;top:-3px">_</span>data<span style="font-size:22px;-webkit-text-stroke-width:0">[</span>542<span style="font-size:22px;-webkit-text-stroke-width:0">]</span></div>
<div class="t" style="left:853px;top:607px;font-size:27px;color:#dcdcdc;letter-spacing:0.6px">99 'c'</div>
<div class="t" style="left:1375px;top:607px;font-size:27px;color:#dcdcdc;letter-spacing:-0.6px">1F1Eh</div>
<div class="t" style="left:1535px;top:607px;font-size:27px;color:#dcdcdc;letter-spacing:-0.8px">1h</div>
<div class="t" style="left:1695px;top:607px;font-size:27px;color:#dcdcdc;">Fg:</div>
<div class="t" style="left:1782px;top:607px;font-size:27px;color:#dcdcdc;">Bg:</div>
<div class="a" style="left:848px;top:600px;width:1px;height:40px;background:#1f1e1d;"></div>
<div class="a" style="left:1370px;top:600px;width:1px;height:40px;background:#1f1e1d;"></div>
<div class="a" style="left:1530px;top:600px;width:1px;height:40px;background:#1f1e1d;"></div>
<div class="a" style="left:1689px;top:600px;width:1px;height:40px;background:#1f1e1d;"></div>
<div class="a" style="left:1880px;top:600px;width:1px;height:40px;background:#1f1e1d;"></div>
<div class="a" style="left:0px;top:640px;width:2226px;height:40px;background:#433f3a;"></div>
<div class="a" style="left:0px;top:678px;width:2226px;height:1px;background:#1f1e1d;"></div>
<div class="t" style="left:166px;top:650px;font-size:27px;color:#dcdcdc;letter-spacing:0.2px">char s<span style="position:relative;top:-3px">_</span>data<span style="font-size:22px;-webkit-text-stroke-width:0">[</span>543<span style="font-size:22px;-webkit-text-stroke-width:0">]</span></div>
<div class="t" style="left:853px;top:647px;font-size:27px;color:#dcdcdc;letter-spacing:0.6px">0</div>
<div class="t" style="left:1375px;top:647px;font-size:27px;color:#dcdcdc;letter-spacing:-0.6px">1F1Fh</div>
<div class="t" style="left:1535px;top:647px;font-size:27px;color:#dcdcdc;letter-spacing:-0.8px">1h</div>
<div class="t" style="left:1695px;top:647px;font-size:27px;color:#dcdcdc;">Fg:</div>
<div class="t" style="left:1782px;top:647px;font-size:27px;color:#dcdcdc;">Bg:</div>
<div class="a" style="left:848px;top:640px;width:1px;height:40px;background:#1f1e1d;"></div>
<div class="a" style="left:1370px;top:640px;width:1px;height:40px;background:#1f1e1d;"></div>
<div class="a" style="left:1530px;top:640px;width:1px;height:40px;background:#1f1e1d;"></div>
<div class="a" style="left:1689px;top:640px;width:1px;height:40px;background:#1f1e1d;"></div>
<div class="a" style="left:1880px;top:640px;width:1px;height:40px;background:#1f1e1d;"></div>
<div class="a" style="left:0px;top:680px;width:2226px;height:40px;background:#3a3835;"></div>
<div class="a" style="left:0px;top:718px;width:2226px;height:1px;background:#1f1e1d;"></div>
<div class="t" style="left:166px;top:690px;font-size:27px;color:#dcdcdc;letter-spacing:0.2px">char s<span style="position:relative;top:-3px">_</span>data<span style="font-size:22px;-webkit-text-stroke-width:0">[</span>544<span style="font-size:22px;-webkit-text-stroke-width:0">]</span></div>
<div class="t" style="left:853px;top:687px;font-size:27px;color:#dcdcdc;letter-spacing:0.6px">112 'p'</div>
<div class="t" style="left:1375px;top:687px;font-size:27px;color:#dcdcdc;letter-spacing:-0.6px">1F20h</div>
<div class="t" style="left:1535px;top:687px;font-size:27px;color:#dcdcdc;letter-spacing:-0.8px">1h</div>
<div class="t" style="left:1695px;top:687px;font-size:27px;color:#dcdcdc;">Fg:</div>
<div class="t" style="left:1782px;top:687px;font-size:27px;color:#dcdcdc;">Bg:</div>
<div class="a" style="left:848px;top:680px;width:1px;height:40px;background:#1f1e1d;"></div>
<div class="a" style="left:1370px;top:680px;width:1px;height:40px;background:#1f1e1d;"></div>
<div class="a" style="left:1530px;top:680px;width:1px;height:40px;background:#1f1e1d;"></div>
<div class="a" style="left:1689px;top:680px;width:1px;height:40px;background:#1f1e1d;"></div>
<div class="a" style="left:1880px;top:680px;width:1px;height:40px;background:#1f1e1d;"></div>
<div class="a" style="left:0px;top:720px;width:2226px;height:40px;background:#433f3a;"></div>
<div class="a" style="left:0px;top:758px;width:2226px;height:1px;background:#1f1e1d;"></div>
<div class="t" style="left:166px;top:730px;font-size:27px;color:#dcdcdc;letter-spacing:0.2px">char s<span style="position:relative;top:-3px">_</span>data<span style="font-size:22px;-webkit-text-stroke-width:0">[</span>545<span style="font-size:22px;-webkit-text-stroke-width:0">]</span></div>
<div class="t" style="left:853px;top:727px;font-size:27px;color:#dcdcdc;letter-spacing:0.6px">116 't'</div>
<div class="t" style="left:1375px;top:727px;font-size:27px;color:#dcdcdc;letter-spacing:-0.6px">1F21h</div>
<div class="t" style="left:1535px;top:727px;font-size:27px;color:#dcdcdc;letter-spacing:-0.8px">1h</div>
<div class="t" style="left:1695px;top:727px;font-size:27px;color:#dcdcdc;">Fg:</div>
<div class="t" style="left:1782px;top:727px;font-size:27px;color:#dcdcdc;">Bg:</div>
<div class="a" style="left:848px;top:720px;width:1px;height:40px;background:#1f1e1d;"></div>
<div class="a" style="left:1370px;top:720px;width:1px;height:40px;background:#1f1e1d;"></div>
<div class="a" style="left:1530px;top:720px;width:1px;height:40px;background:#1f1e1d;"></div>
<div class="a" style="left:1689px;top:720px;width:1px;height:40px;background:#1f1e1d;"></div>
<div class="a" style="left:1880px;top:720px;width:1px;height:40px;background:#1f1e1d;"></div>
<div class="a" style="left:0px;top:760px;width:2226px;height:40px;background:#3a3835;"></div>
<div class="a" style="left:0px;top:798px;width:2226px;height:1px;background:#1f1e1d;"></div>
<div class="t" style="left:166px;top:770px;font-size:27px;color:#dcdcdc;letter-spacing:0.2px">char s<span style="position:relative;top:-3px">_</span>data<span style="font-size:22px;-webkit-text-stroke-width:0">[</span>546<span style="font-size:22px;-webkit-text-stroke-width:0">]</span></div>
<div class="t" style="left:853px;top:767px;font-size:27px;color:#dcdcdc;letter-spacing:0.6px">104 'h'</div>
<div class="t" style="left:1375px;top:767px;font-size:27px;color:#dcdcdc;letter-spacing:-0.6px">1F22h</div>
<div class="t" style="left:1535px;top:767px;font-size:27px;color:#dcdcdc;letter-spacing:-0.8px">1h</div>
<div class="t" style="left:1695px;top:767px;font-size:27px;color:#dcdcdc;">Fg:</div>
<div class="t" style="left:1782px;top:767px;font-size:27px;color:#dcdcdc;">Bg:</div>
<div class="a" style="left:848px;top:760px;width:1px;height:40px;background:#1f1e1d;"></div>
<div class="a" style="left:1370px;top:760px;width:1px;height:40px;background:#1f1e1d;"></div>
<div class="a" style="left:1530px;top:760px;width:1px;height:40px;background:#1f1e1d;"></div>
<div class="a" style="left:1689px;top:760px;width:1px;height:40px;background:#1f1e1d;"></div>
<div class="a" style="left:1880px;top:760px;width:1px;height:40px;background:#1f1e1d;"></div>
<div class="a" style="left:0px;top:800px;width:2226px;height:40px;background:#433f3a;"></div>
<div class="a" style="left:0px;top:838px;width:2226px;height:1px;background:#1f1e1d;"></div>
<div class="t" style="left:166px;top:810px;font-size:27px;color:#dcdcdc;letter-spacing:0.2px">char s<span style="position:relative;top:-3px">_</span>data<span style="font-size:22px;-webkit-text-stroke-width:0">[</span>547<span style="font-size:22px;-webkit-text-stroke-width:0">]</span></div>
<div class="t" style="left:853px;top:807px;font-size:27px;color:#dcdcdc;letter-spacing:0.6px">114 'r'</div>
<div class="t" style="left:1375px;top:807px;font-size:27px;color:#dcdcdc;letter-spacing:-0.6px">1F23h</div>
<div class="t" style="left:1535px;top:807px;font-size:27px;color:#dcdcdc;letter-spacing:-0.8px">1h</div>
<div class="t" style="left:1695px;top:807px;font-size:27px;color:#dcdcdc;">Fg:</div>
<div class="t" style="left:1782px;top:807px;font-size:27px;color:#dcdcdc;">Bg:</div>
<div class="a" style="left:848px;top:800px;width:1px;height:40px;background:#1f1e1d;"></div>
<div class="a" style="left:1370px;top:800px;width:1px;height:40px;background:#1f1e1d;"></div>
<div class="a" style="left:1530px;top:800px;width:1px;height:40px;background:#1f1e1d;"></div>
<div class="a" style="left:1689px;top:800px;width:1px;height:40px;background:#1f1e1d;"></div>
<div class="a" style="left:1880px;top:800px;width:1px;height:40px;background:#1f1e1d;"></div>
<div class="a" style="left:0px;top:840px;width:2226px;height:40px;background:#3a3835;"></div>
<div class="a" style="left:0px;top:878px;width:2226px;height:1px;background:#1f1e1d;"></div>
<div class="t" style="left:166px;top:850px;font-size:27px;color:#dcdcdc;letter-spacing:0.2px">char s<span style="position:relative;top:-3px">_</span>data<span style="font-size:22px;-webkit-text-stroke-width:0">[</span>548<span style="font-size:22px;-webkit-text-stroke-width:0">]</span></div>
<div class="t" style="left:853px;top:847px;font-size:27px;color:#dcdcdc;letter-spacing:0.6px">101 'e'</div>
<div class="t" style="left:1375px;top:847px;font-size:27px;color:#dcdcdc;letter-spacing:-0.6px">1F24h</div>
<div class="t" style="left:1535px;top:847px;font-size:27px;color:#dcdcdc;letter-spacing:-0.8px">1h</div>
<div class="t" style="left:1695px;top:847px;font-size:27px;color:#dcdcdc;">Fg:</div>
<div class="t" style="left:1782px;top:847px;font-size:27px;color:#dcdcdc;">Bg:</div>
<div class="a" style="left:848px;top:840px;width:1px;height:40px;background:#1f1e1d;"></div>
<div class="a" style="left:1370px;top:840px;width:1px;height:40px;background:#1f1e1d;"></div>
<div class="a" style="left:1530px;top:840px;width:1px;height:40px;background:#1f1e1d;"></div>
<div class="a" style="left:1689px;top:840px;width:1px;height:40px;background:#1f1e1d;"></div>
<div class="a" style="left:1880px;top:840px;width:1px;height:40px;background:#1f1e1d;"></div>
<div class="a" style="left:0px;top:880px;width:2226px;height:40px;background:#433f3a;"></div>
<div class="a" style="left:0px;top:918px;width:2226px;height:1px;background:#1f1e1d;"></div>
<div class="t" style="left:166px;top:890px;font-size:27px;color:#dcdcdc;letter-spacing:0.2px">char s<span style="position:relative;top:-3px">_</span>data<span style="font-size:22px;-webkit-text-stroke-width:0">[</span>549<span style="font-size:22px;-webkit-text-stroke-width:0">]</span></div>
<div class="t" style="left:853px;top:887px;font-size:27px;color:#dcdcdc;letter-spacing:0.6px">97 'a'</div>
<div class="t" style="left:1375px;top:887px;font-size:27px;color:#dcdcdc;letter-spacing:-0.6px">1F25h</div>
<div class="t" style="left:1535px;top:887px;font-size:27px;color:#dcdcdc;letter-spacing:-0.8px">1h</div>
<div class="t" style="left:1695px;top:887px;font-size:27px;color:#dcdcdc;">Fg:</div>
<div class="t" style="left:1782px;top:887px;font-size:27px;color:#dcdcdc;">Bg:</div>
<div class="a" style="left:848px;top:880px;width:1px;height:40px;background:#1f1e1d;"></div>
<div class="a" style="left:1370px;top:880px;width:1px;height:40px;background:#1f1e1d;"></div>
<div class="a" style="left:1530px;top:880px;width:1px;height:40px;background:#1f1e1d;"></div>
<div class="a" style="left:1689px;top:880px;width:1px;height:40px;background:#1f1e1d;"></div>
<div class="a" style="left:1880px;top:880px;width:1px;height:40px;background:#1f1e1d;"></div>
</div>
<div class="a" style="left:0px;top:1534px;width:2228px;height:1.5px;background:#777;"></div>
<div class="a" style="left:0px;top:1535.5px;width:2228px;height:0.5px;background:#2a2a2a;"></div>
<div class="a" style="left:2228px;top:2px;width:1.5px;height:1534px;background:#9a9a9a;"></div>
<div class="a" style="left:2229.5px;top:0px;width:525px;height:1536px;background:#3b3936;"></div>
<div class="a" style="left:2754px;top:2px;width:1.8px;height:1534px;background:#7a7a78;"></div>
<div class="a" style="left:2755.8px;top:0px;width:1.2px;height:1536px;background:#151515;"></div>
<div class="a" style="left:2757px;top:0px;width:3px;height:1536px;background:#35332f;"></div>
<div class="a" style="left:2757px;top:42px;width:3px;height:21px;background:#2e4a70;"></div>
<div class="a" style="left:2230px;top:2px;width:524px;height:39px;background:linear-gradient(#2e2e2e,#757575)"></div>
<div class="a" style="left:2230px;top:41px;width:524px;height:3px;background:#c8c8c8;"></div>
<div class="t" style="left:2303px;top:11.5px;width:454px;text-align:center;font-size:27px;color:#f0f0f0;letter-spacing:0.3px">Workspace</div>
<svg class="a" style="left:2235px;top:14px" width="23" height="23" viewBox="0 0 23 23"><circle cx="11.5" cy="11.5" r="10.5" fill="#3a3a3a"/><path d="M8.3 8.3L14.7 14.7M14.7 8.3L8.3 14.7" stroke="#fff" stroke-width="2.8" stroke-linecap="square"/></svg>
<svg class="a" style="left:2268px;top:17px" width="20" height="13" viewBox="0 0 20 13"><path d="M0.5 0.5h19l-9.5 12z" fill="#2b2b2b"/></svg>
<svg class="a" style="left:2235px;top:45px;overflow:visible" width="40" height="40" viewBox="0 0 40 40"><path d="M5 31V8.5L6.8 6.8H13L15 9V11H27V17.3H35.2L23 31Z" fill="#fbeeb0" stroke="#e4b64a" stroke-width="2" stroke-linejoin="miter"/><path d="M17.3 17.3H27M17.3 17.3L6 30.3" fill="none" stroke="#e4b64a" stroke-width="2"/></svg>
<div class="t" style="left:2293px;top:48px;font-size:27px;color:#dedede;">Open Files</div>
<svg class="a" style="left:2265px;top:80px" width="23" height="29" viewBox="0 0 23 29"><path d="M1 1H14L21 8V27H1Z" fill="#f9fbff" stroke="#9ab0d4" stroke-width="2"/><path d="M14 1V8H21" fill="#eef3fb" stroke="#9ab0d4" stroke-width="2"/></svg>
<div class="t" style="left:2313px;top:82px;font-size:27px;color:#e4e4e4;">libnative-lib.so</div>
<div class="t" style="left:2538px;top:82px;font-size:27px;color:#8c8c8c;">/Users/...bi-v7a/</div>
<svg class="a" style="left:2235px;top:113px;overflow:visible" width="40" height="40" viewBox="0 0 40 40"><path d="M5 31V8.5L6.8 6.8H13L15 9V11H27V17.3H35.2L23 31Z" fill="#fbeeb0" stroke="#e4b64a" stroke-width="2" stroke-linejoin="miter"/><path d="M17.3 17.3H27M17.3 17.3L6 30.3" fill="none" stroke="#e4b64a" stroke-width="2"/><path d="M26 0.5l3 6.6 7.2 0.7-5.4 4.8 1.6 7.1L26 16l-6.4 3.7 1.6-7.1-5.4-4.8 7.2-0.7z" fill="#62a6ea" stroke="#4d8ccd" stroke-width="1"/></svg>
<div class="t" style="left:2293px;top:116px;font-size:27px;color:#dedede;">Favorite Files</div>
<svg class="a" style="left:2235px;top:145px;overflow:visible" width="40" height="40" viewBox="0 0 40 40"><path d="M5 31V8.5L6.8 6.8H13L15 9V11H27V17.3H35.2L23 31Z" fill="#fbeeb0" stroke="#e4b64a" stroke-width="2" stroke-linejoin="miter"/><path d="M17.3 17.3H27M17.3 17.3L6 30.3" fill="none" stroke="#e4b64a" stroke-width="2"/><circle cx="25.3" cy="9.8" r="10.3" fill="#f8faff" stroke="#9db3d6" stroke-width="2"/><path d="M25 11.5l3.5-3.5" stroke="#7a9ac8" stroke-width="1.8"/><rect x="24" y="3.2" width="2" height="2" fill="#7a9ac8"/><rect x="19" y="11.3" width="2" height="2" fill="#7a9ac8"/><rect x="29.5" y="11.3" width="2" height="2" fill="#7a9ac8"/><path d="M17.3 17.3H35.2L23 31H6z" fill="#fbeeb0" stroke="#e4b64a" stroke-width="2"/></svg>
<div class="t" style="left:2293px;top:149px;font-size:27px;color:#dedede;">Recent Files</div>
<svg class="a" style="left:2235px;top:169px;overflow:visible" width="40" height="48" viewBox="0 0 40 48"><g transform="translate(0,8)"><path d="M22 32V2.5L23.8 0.7H35.2L37 2.5V29.5L30.5 24" fill="#fbeeb0" stroke="#e4b64a" stroke-width="2"/><path d="M5 31V8.5L6.8 6.8H13L15 9V11H27V17.3H35.2L23 31Z" fill="#fbeeb0" stroke="#e4b64a" stroke-width="2" stroke-linejoin="miter"/><path d="M17.3 17.3H27M17.3 17.3L6 30.3" fill="none" stroke="#e4b64a" stroke-width="2"/><path d="M30.5 24L37 30" stroke="#e4b64a" stroke-width="2"/></g></svg>
<div class="t" style="left:2293px;top:181px;font-size:27px;color:#dedede;">Bookmarked Files</div>
<div class="a" style="left:2230px;top:857px;width:524px;height:3px;background:#9a9a9a;"></div>
<div class="a" style="left:2238px;top:857px;width:274px;height:40px;background:#878787;"></div>
<svg class="a" style="left:2240px;top:855px" width="45" height="40" viewBox="0 0 45 40"><path d="M23.1 6H32.400000000000006L38.900000000000006 12.5V26H23.1Z" fill="#f9fbff" stroke="#9ab0d4" stroke-width="2"/><path d="M32.400000000000006 6V12.5H38.900000000000006" fill="#eef3fb" stroke="#9ab0d4" stroke-width="2"/><path d="M19 10H28.299999999999997L34.8 16.5V30H19Z" fill="#f9fbff" stroke="#9ab0d4" stroke-width="2"/><path d="M28.299999999999997 10V16.5H34.8" fill="#eef3fb" stroke="#9ab0d4" stroke-width="2"/><path d="M15 14H24.3L30.8 20.5V34H15Z" fill="#f9fbff" stroke="#9ab0d4" stroke-width="2"/><path d="M24.3 14V20.5H30.8" fill="#eef3fb" stroke="#9ab0d4" stroke-width="2"/></svg>
<div class="t" style="left:2327px;top:865px;font-size:27px;color:#000;letter-spacing:0.3px">Workspace</div>
<svg class="a" style="left:2520.8px;top:859.2px;overflow:visible" width="40" height="40" viewBox="0 0 40 40"><path d="M5 31V8.5L6.8 6.8H13L15 9V11H27V17.3H35.2L23 31Z" fill="#fbeeb0" stroke="#e4b64a" stroke-width="2" stroke-linejoin="miter"/><path d="M17.3 17.3H27M17.3 17.3L6 30.3" fill="none" stroke="#e4b64a" stroke-width="2"/></svg>
<div class="t" style="left:2601px;top:865px;font-size:27px;color:#dcdcdc;letter-spacing:0.2px">Explorer</div>
<div class="a" style="left:2230px;top:897px;width:524px;height:2px;background:#bdbdbd;"></div>
<div class="a" style="left:2230px;top:899px;width:524px;height:39px;background:linear-gradient(#2e2e2e,#757575)"></div>
<div class="a" style="left:2230px;top:938px;width:524px;height:3px;background:#c8c8c8;"></div>
<div class="t" style="left:2303px;top:908.5px;width:454px;text-align:center;font-size:27px;color:#f0f0f0;letter-spacing:0.3px">Inspector</div>
<svg class="a" style="left:2235px;top:911px" width="23" height="23" viewBox="0 0 23 23"><circle cx="11.5" cy="11.5" r="10.5" fill="#3a3a3a"/><path d="M8.3 8.3L14.7 14.7M14.7 8.3L8.3 14.7" stroke="#fff" stroke-width="2.8" stroke-linecap="square"/></svg>
<svg class="a" style="left:2268px;top:914px" width="20" height="13" viewBox="0 0 20 13"><path d="M0.5 0.5h19l-9.5 12z" fill="#2b2b2b"/></svg>
<div class="a" style="left:2230px;top:942px;width:524px;height:41px;background:#313131;"></div>
<div class="t" style="left:2230px;top:950px;width:239px;text-align:center;font-size:24px;color:#000">Type</div>
<div class="t" style="left:2469px;top:950px;width:286px;text-align:center;font-size:24px;color:#000">Value</div>
<div class="a" style="left:2468px;top:946px;width:2px;height:36px;background:#c8c8c8;"></div>
<div class="a" style="left:2751px;top:946px;width:2px;height:36px;background:#c8c8c8;"></div>
<div class="a" style="left:2230px;top:983px;width:524px;height:509px;overflow:hidden">
<div class="a" style="left:0px;top:0px;width:524px;height:39px;background:#5a5a5a;"></div>
<div class="a" style="left:0px;top:39px;width:524px;height:1px;background:#1f1e1d;"></div>
<div class="a" style="left:238px;top:0px;width:2px;height:40px;background:#1f1e1d;"></div>
<div class="t" style="left:5px;top:8px;font-size:27px;color:#ffffff;">Signed Byte</div>
<div class="t" style="left:245px;top:8px;font-size:27px;color:#ffffff;">111</div>
<div class="a" style="left:0px;top:40px;width:524px;height:39px;background:#433f3a;"></div>
<div class="a" style="left:0px;top:79px;width:524px;height:1px;background:#1f1e1d;"></div>
<div class="a" style="left:238px;top:40px;width:2px;height:40px;background:#1f1e1d;"></div>
<div class="t" style="left:5px;top:48px;font-size:27px;color:#dcdcdc;">Unsigned Byte</div>
<div class="t" style="left:245px;top:48px;font-size:27px;color:#dcdcdc;">111</div>
<div class="a" style="left:0px;top:80px;width:524px;height:39px;background:#3a3835;"></div>
<div class="a" style="left:0px;top:119px;width:524px;height:1px;background:#1f1e1d;"></div>
<div class="a" style="left:238px;top:80px;width:2px;height:40px;background:#1f1e1d;"></div>
<div class="t" style="left:5px;top:88px;font-size:27px;color:#dcdcdc;">Signed Short</div>
<div class="t" style="left:245px;top:88px;font-size:27px;color:#dcdcdc;">28527</div>
<div class="a" style="left:0px;top:120px;width:524px;height:39px;background:#433f3a;"></div>
<div class="a" style="left:0px;top:159px;width:524px;height:1px;background:#1f1e1d;"></div>
<div class="a" style="left:238px;top:120px;width:2px;height:40px;background:#1f1e1d;"></div>
<div class="t" style="left:5px;top:128px;font-size:27px;color:#dcdcdc;">Unsigned Short</div>
<div class="t" style="left:245px;top:128px;font-size:27px;color:#dcdcdc;">28527</div>
<div class="a" style="left:0px;top:160px;width:524px;height:39px;background:#3a3835;"></div>
<div class="a" style="left:0px;top:199px;width:524px;height:1px;background:#1f1e1d;"></div>
<div class="a" style="left:238px;top:160px;width:2px;height:40px;background:#1f1e1d;"></div>
<div class="t" style="left:5px;top:168px;font-size:27px;color:#dcdcdc;">Signed Int</div>
<div class="t" style="left:245px;top:168px;font-size:27px;color:#dcdcdc;">2021158767</div>
<div class="a" style="left:0px;top:200px;width:524px;height:39px;background:#433f3a;"></div>
<div class="a" style="left:0px;top:239px;width:524px;height:1px;background:#1f1e1d;"></div>
<div class="a" style="left:238px;top:200px;width:2px;height:40px;background:#1f1e1d;"></div>
<div class="t" style="left:5px;top:208px;font-size:27px;color:#dcdcdc;">Unsigned Int</div>
<div class="t" style="left:245px;top:208px;font-size:27px;color:#dcdcdc;">2021158767</div>
<div class="a" style="left:0px;top:240px;width:524px;height:39px;background:#3a3835;"></div>
<div class="a" style="left:0px;top:279px;width:524px;height:1px;background:#1f1e1d;"></div>
<div class="a" style="left:238px;top:240px;width:2px;height:40px;background:#1f1e1d;"></div>
<div class="t" style="left:5px;top:248px;font-size:27px;color:#dcdcdc;">Signed Int64</div>
<div class="t" style="left:245px;top:248px;font-size:27px;color:#dcdcdc;">7809632082509459...</div>
<div class="a" style="left:0px;top:280px;width:524px;height:39px;background:#433f3a;"></div>
<div class="a" style="left:0px;top:319px;width:524px;height:1px;background:#1f1e1d;"></div>
<div class="a" style="left:238px;top:280px;width:2px;height:40px;background:#1f1e1d;"></div>
<div class="t" style="left:5px;top:288px;font-size:27px;color:#dcdcdc;">Unsigned Int64</div>
<div class="t" style="left:245px;top:288px;font-size:27px;color:#dcdcdc;">7809632082509459...</div>
<div class="a" style="left:0px;top:320px;width:524px;height:39px;background:#3a3835;"></div>
<div class="a" style="left:0px;top:359px;width:524px;height:1px;background:#1f1e1d;"></div>
<div class="a" style="left:238px;top:320px;width:2px;height:40px;background:#1f1e1d;"></div>
<div class="t" style="left:5px;top:328px;font-size:27px;color:#dcdcdc;">Float</div>
<div class="t" style="left:245px;top:328px;font-size:27px;color:#dcdcdc;">2.015547e+34</div>
<div class="a" style="left:0px;top:360px;width:524px;height:39px;background:#433f3a;"></div>
<div class="a" style="left:0px;top:399px;width:524px;height:1px;background:#1f1e1d;"></div>
<div class="a" style="left:238px;top:360px;width:2px;height:40px;background:#1f1e1d;"></div>
<div class="t" style="left:5px;top:368px;font-size:27px;color:#dcdcdc;">Double</div>
<div class="t" style="left:245px;top:368px;font-size:27px;color:#dcdcdc;">1.17064372835741e...</div>
<div class="a" style="left:0px;top:400px;width:524px;height:39px;background:#3a3835;"></div>
<div class="a" style="left:0px;top:439px;width:524px;height:1px;background:#1f1e1d;"></div>
<div class="a" style="left:238px;top:400px;width:2px;height:40px;background:#1f1e1d;"></div>
<div class="t" style="left:5px;top:408px;font-size:27px;color:#dcdcdc;">Half Float</div>
<div class="t" style="left:245px;top:408px;font-size:27px;color:#dcdcdc;">7612</div>
<div class="a" style="left:0px;top:440px;width:524px;height:39px;background:#433f3a;"></div>
<div class="a" style="left:0px;top:479px;width:524px;height:1px;background:#1f1e1d;"></div>
<div class="a" style="left:238px;top:440px;width:2px;height:40px;background:#1f1e1d;"></div>
<div class="t" style="left:5px;top:448px;font-size:27px;color:#dcdcdc;">String</div>
<div class="t" style="left:245px;top:448px;font-size:27px;color:#dcdcdc;">ooxx</div>
<div class="a" style="left:0px;top:480px;width:524px;height:39px;background:#3a3835;"></div>
<div class="a" style="left:0px;top:519px;width:524px;height:1px;background:#1f1e1d;"></div>
<div class="a" style="left:238px;top:480px;width:2px;height:40px;background:#1f1e1d;"></div>
<div class="t" style="left:5px;top:488px;font-size:27px;color:#dcdcdc;">DOSDATE</div>
<div class="t" style="left:245px;top:488px;font-size:27px;color:#dcdcdc;">11/15/2035</div>
</div>
<div class="a" style="left:2230px;top:1492px;width:524px;height:4px;background:#9a9a9a;"></div>
<div class="a" style="left:2230px;top:1496px;width:524px;height:40px;background:#3b3936;"></div>
<div class="a" style="left:2230px;top:1492px;width:252px;height:42px;background:#878787;"></div>
<svg class="a" style="left:2230px;top:1490px" width="45" height="45" viewBox="0 0 45 45"><path d="M33 8.7L16 25H26.6L22.8 35.3L39.8 18.9H30.5Z" fill="#f8e79a" stroke="#e4b64a" stroke-width="2.6" stroke-linejoin="round"/></svg>
<div class="t" style="left:2318px;top:1502px;font-size:27px;color:#000;">Inspector</div>
<svg class="a" style="left:2490px;top:1490px" width="45" height="45" viewBox="0 0 45 45"><rect x="9" y="8.9" width="8" height="8" fill="#fbf0b4" stroke="#e8bf55" stroke-width="2"/><rect x="23.1" y="16.9" width="8" height="8" fill="#fbf0b4" stroke="#e8bf55" stroke-width="2"/><rect x="23.1" y="28.9" width="8" height="8" fill="#fbf0b4" stroke="#e8bf55" stroke-width="2"/><g fill="#5b9fe2"><rect x="13.8" y="19.8" width="2.4" height="2.4"/><rect x="17.7" y="19.8" width="2.4" height="2.4"/><rect x="13.8" y="23.8" width="2.4" height="2.4"/><rect x="13.8" y="27.8" width="2.4" height="2.4"/><rect x="13.8" y="31.8" width="2.4" height="2.4"/><rect x="17.7" y="31.8" width="2.4" height="2.4"/></g></svg>
<div class="t" style="left:2571px;top:1502px;font-size:27px;color:#dcdcdc;">Variables</div>
<div class="a" style="left:2693px;top:1496px;width:30px;height:38px;background:#333"></div>
<div class="a" style="left:2725px;top:1496px;width:30px;height:38px;background:#3a3a3a"></div>
<svg class="a" style="left:2700px;top:1504px" width="20" height="26" viewBox="0 0 20 26"><path d="M15 3L5 13l10 10" fill="none" stroke="#777" stroke-width="2"/></svg>
<svg class="a" style="left:2730px;top:1504px" width="20" height="26" viewBox="0 0 20 26"><path d="M5 3l10 10L5 23" fill="none" stroke="#bbb" stroke-width="2"/></svg>
</div></body></html>
